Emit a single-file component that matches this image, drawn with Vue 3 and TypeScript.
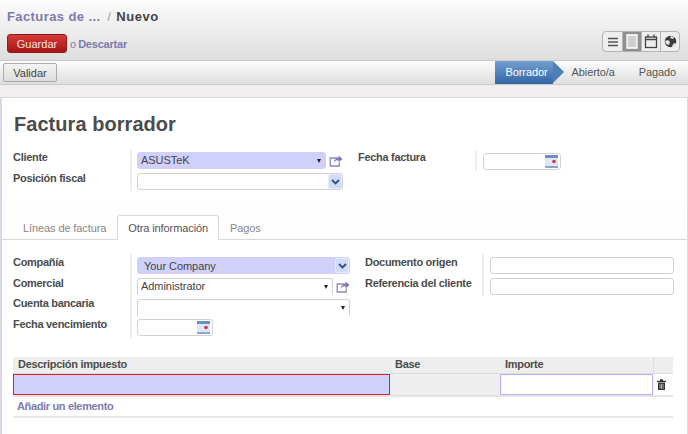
<template>
  <div class="page">
    <header class="topbar">
      <div class="crumbs">
        <a class="crumb-link">Facturas de ...</a>
        <span class="crumb-sep">/</span>
        <span class="crumb-now">Nuevo</span>
      </div>
      <div class="actions">
        <div class="save-group">
          <button class="btn-save">Guardar</button>
          <span class="or">o</span>
          <a class="discard">Descartar</a>
        </div>
        <div class="views">
          <span class="view">
            <svg width="12" height="10" viewBox="0 0 12 10"><path d="M1 1.500h10M1 5h10M1 8.500h10" stroke="#555" stroke-width="1.600" /></svg>
          </span>
          <span class="view view-on">
            <svg width="12" height="15" viewBox="0 0 12 15"><rect x="1.200" y="1" width="9.600" height="13" fill="#cfcfcf" stroke="#f4f4f4" stroke-width="1.800" /></svg>
          </span>
          <span class="view">
            <svg width="14" height="15" viewBox="0 0 14 15"><rect x="1.500" y="3" width="11" height="10.500" fill="#eee" stroke="#444" stroke-width="1.300" /><path d="M1.500 5.500h11" stroke="#444" stroke-width="1.600" /><path d="M4 0.500v3M10 0.500v3" stroke="#444" stroke-width="1.300" /></svg>
          </span>
          <span class="view">
            <svg width="13" height="13" viewBox="0 0 13 13"><circle cx="6.500" cy="6.500" r="5.800" fill="#3c3c3c" /><path d="M1 6l3-1 2 2-1 3-3-1zM7 1l3 1-1 2-3-1zM8 12l1-3 2-1 1 1-2 3z" fill="#e4e4e4" /></svg>
          </span>
        </div>
      </div>
    </header>

    <div class="statusbar">
      <button class="btn-validate">Validar</button>
      <div class="steps">
        <span class="step step-on">Borrador</span>
        <span class="step step-open">Abierto/a</span>
        <span class="step step-paid">Pagado</span>
      </div>
    </div>

    <div class="strip"></div>

    <main class="sheet">
      <h1 class="title">Factura borrador</h1>

      <section class="top-fields">
        <div class="group group-client">
          <div class="labels">
            <label>Cliente</label>
            <label>Posición fiscal</label>
          </div>
          <div class="inputs">
            <div class="with-link">
              <div class="field required grow">ASUSTeK<i class="caret"></i></div>
              <svg class="ext" width="14" height="12" viewBox="0 0 14 12"><path d="M9 3H1.200v8h9V7.500" fill="none" stroke="#8a88bd" stroke-width="1.300" /><path d="M4.500 7.500C5 4.500 7.500 3 9.500 3V0.500L13.500 4 9.500 7.500V5.200C7.500 5.200 5.800 5.800 4.500 7.500Z" fill="#7c7ab0" /></svg>
            </div>
            <div class="field">
              <span class="sel-btn"><svg width="9" height="6" viewBox="0 0 9 6"><path d="M1 1l3.500 3.500L8 1" fill="none" stroke="#3d4a78" stroke-width="1.800" /></svg></span>
            </div>
          </div>
        </div>
        <div class="group group-date">
          <div class="labels"><label>Fecha factura</label></div>
          <div class="inputs">
            <div class="field date-field">
              <svg class="cal" width="13" height="13" viewBox="0 0 13 13"><rect width="13" height="13" fill="#dfe6f5" /><rect width="13" height="3" fill="#6a8fc4" /><rect y="11" width="13" height="2" fill="#8ea6cc" /><circle cx="9" cy="6.500" r="1.800" fill="#c5394a" /></svg>
            </div>
          </div>
        </div>
      </section>

      <nav class="tabs">
        <a class="tab">Líneas de factura</a>
        <a class="tab tab-on">Otra información</a>
        <a class="tab">Pagos</a>
      </nav>

      <section class="info">
        <div class="group group-left">
          <div class="labels">
            <label>Compañía</label>
            <label>Comercial</label>
            <label>Cuenta bancaria</label>
            <label>Fecha vencimiento</label>
          </div>
          <div class="inputs">
            <div class="field required company">Your Company
              <span class="sel-btn"><svg width="9" height="6" viewBox="0 0 9 6"><path d="M1 1l3.500 3.500L8 1" fill="none" stroke="#3d4a78" stroke-width="1.800" /></svg></span>
            </div>
            <div class="with-link">
              <div class="field open-bottom grow">Administrator<i class="caret"></i></div>
              <svg class="ext" width="14" height="12" viewBox="0 0 14 12"><path d="M9 3H1.200v8h9V7.500" fill="none" stroke="#8a88bd" stroke-width="1.300" /><path d="M4.500 7.500C5 4.500 7.500 3 9.500 3V0.500L13.500 4 9.500 7.500V5.200C7.500 5.200 5.800 5.800 4.500 7.500Z" fill="#7c7ab0" /></svg>
            </div>
            <div class="field open-bottom"><i class="caret"></i></div>
            <div class="field date-due">
              <svg class="cal" width="13" height="13" viewBox="0 0 13 13"><rect width="13" height="13" fill="#dfe6f5" /><rect width="13" height="3" fill="#6a8fc4" /><rect y="11" width="13" height="2" fill="#8ea6cc" /><circle cx="9" cy="6.500" r="1.800" fill="#c5394a" /></svg>
            </div>
          </div>
        </div>
        <div class="group group-right">
          <div class="labels">
            <label>Documento origen</label>
            <label>Referencia del cliente</label>
          </div>
          <div class="inputs">
            <div class="field"></div>
            <div class="field"></div>
          </div>
        </div>
      </section>

      <table class="taxes">
        <thead>
          <tr>
            <th class="col-desc">Descripción impuesto</th>
            <th class="col-base">Base</th>
            <th class="col-amount">Importe</th>
            <th class="col-del"></th>
          </tr>
        </thead>
        <tbody>
          <tr class="edit-row">
            <td><div class="cell-invalid"></div></td>
            <td></td>
            <td><div class="cell-amount"></div></td>
            <td class="del-cell">
              <svg width="9" height="11" viewBox="0 0 9 11"><path d="M0 1.800h9V3H0zM3 0.300h3v1.500H3z" fill="#333" /><path d="M1 3.500h7V11H1z" fill="#333" /><path d="M3 4.800v5M4.500 4.800v5M6 4.800v5" stroke="#ddd" stroke-width="0.700" /></svg>
            </td>
          </tr>
          <tr class="add-row">
            <td colspan="4"><a class="add-link">Añadir un elemento</a></td>
          </tr>
        </tbody>
      </table>
    </main>
  </div>
</template>

<script setup lang="ts">
</script>

<style>
html, body {
  margin: 0;
  overflow: hidden;
}
</style>

<style scoped>
.page {
  width: 688px;
  height: 434px;
  overflow: hidden;
  font-family: "Liberation Sans", Arial, sans-serif;
  font-size: 11px;
  color: #4c4c4c;
  background: #f0eeee;
}

/* top bar */
.topbar {
  box-sizing: border-box;
  height: 61px;
  padding: 8px 8px 0 7px;
  background: linear-gradient(#fcfcfc, #dedede);
  border-bottom: 1px solid #cacaca;
}
.crumbs {
  display: flex;
  align-items: baseline;
  height: 18px;
  font-size: 13px;
  line-height: 18px;
  letter-spacing: 0.4px;
}
.crumb-link {
  color: #7c7bad;
  font-weight: bold;
}
.crumb-sep {
  margin-left: 7px;
  color: #999;
  font-size: 12px;
}
.crumb-now {
  margin-left: 5px;
  color: #444;
  font-weight: bold;
  letter-spacing: 0.6px;
}
.actions {
  display: flex;
  justify-content: space-between;
  margin-top: 7px;
}
.save-group {
  display: flex;
  align-items: center;
  height: 19px;
  margin-top: 1px;
}
.btn-save {
  box-sizing: border-box;
  width: 60px;
  height: 19px;
  padding: 0;
  border: 1px solid #8d1c1c;
  border-radius: 3px;
  background: linear-gradient(#d63a3a, #aa1414);
  color: #f6e4e4;
  font-family: inherit;
  font-size: 11px;
}
.or {
  margin-left: 3px;
  color: #7c7bad;
  font-size: 11px;
}
.discard {
  margin-left: 2px;
  color: #7c7bad;
  font-weight: bold;
  font-size: 11px;
  letter-spacing: -0.2px;
}
.views {
  display: flex;
  box-sizing: border-box;
  height: 21px;
  margin-top: -2px;
  border: 1px solid #b5b5b5;
  border-radius: 4px;
  background: #eee;
  overflow: hidden;
}
.view {
  display: flex;
  align-items: center;
  justify-content: center;
  box-sizing: border-box;
  width: 19px;
  border-left: 1px solid #b5b5b5;
}
.view:first-child {
  border-left: 0;
}
.view-on {
  background: #8f8f8f;
}

/* status bar */
.statusbar {
  display: flex;
  justify-content: space-between;
  box-sizing: border-box;
  height: 24px;
  padding-left: 3px;
  background: linear-gradient(#fcfcfc, #dedede);
  border-bottom: 1px solid #cacaca;
}
.btn-validate {
  box-sizing: border-box;
  width: 54px;
  height: 19px;
  margin-top: 2px;
  padding: 0;
  border: 1px solid #aaa;
  border-radius: 2px;
  background: linear-gradient(#f4f4f4, #dcdcdc);
  color: #444;
  font-family: inherit;
  font-size: 11px;
}
.steps {
  display: flex;
  height: 23px;
  line-height: 23px;
  letter-spacing: -0.1px;
}
.step {
  position: relative;
  color: #555;
}
.step-on {
  box-sizing: border-box;
  width: 58px;
  padding-left: 11px;
  background: linear-gradient(#729fcf, #3465a4);
  color: #fff;
}
.step-on::after {
  content: "";
  position: absolute;
  top: 0;
  right: -11px;
  border-left: 11px solid #4f7fb9;
  border-top: 11.500px solid transparent;
  border-bottom: 11.500px solid transparent;
}
.step-open {
  margin-left: 19px;
}
.step-paid {
  margin-left: 24px;
  margin-right: 12px;
}

.strip {
  height: 12px;
  background: #f0eeee;
}

/* sheet */
.sheet {
  box-sizing: border-box;
  height: 337px;
  border: 1px solid #d9d8e4;
  border-width: 1px 1px 0 2px;
  background: #fff;
}
.title {
  margin: 0;
  padding: 14px 0 0 12px;
  color: #4c4c4c;
  font-size: 20px;
  line-height: 24px;
  font-weight: bold;
  letter-spacing: 0.05px;
}

.group {
  display: flex;
}
.labels {
  display: flex;
  flex-direction: column;
  box-sizing: border-box;
  border-right: 2px solid #eeeeee;
}
.labels label {
  height: 21px;
  color: #4c4c4c;
  font-weight: bold;
  font-size: 11px;
  line-height: 15px;
  letter-spacing: -0.3px;
}
.inputs {
  display: flex;
  flex-direction: column;
  gap: 4px;
}

.top-fields {
  display: flex;
  padding: 14px 0 0 11px;
}
.group-client .labels {
  width: 119px;
  height: 41px;
}
.group-client .inputs {
  width: 206px;
  margin-left: 5px;
  padding-top: 2px;
}
.with-link {
  display: flex;
  align-items: center;
  gap: 3px;
}
.grow {
  flex: 1;
}

.field {
  position: relative;
  box-sizing: border-box;
  height: 17px;
  padding-left: 3px;
  border: 1px solid #d2d2d2;
  border-radius: 3px;
  background: #fff;
  color: #444;
  font-size: 11px;
  line-height: 15px;
  letter-spacing: -0.05px;
}
.required {
  border-color: #d0d0fa;
  background: #d0d0fa;
}
.open-bottom {
  border-bottom-color: transparent;
  border-radius: 3px 3px 0 0;
}
.caret {
  position: absolute;
  top: 6px;
  right: 4px;
  border-top: 4px solid #222;
  border-left: 2.500px solid transparent;
  border-right: 2.500px solid transparent;
}
.sel-btn {
  position: absolute;
  top: 0;
  right: 0;
  display: flex;
  align-items: center;
  justify-content: center;
  box-sizing: border-box;
  width: 14px;
  height: 15px;
  background: #cfdcf7;
  border: 1px solid #e4ebfa;
  border-radius: 2px;
}
.ext {
  flex: none;
}
.cal {
  position: absolute;
  top: 1px;
  right: 2px;
}

.group-date {
  margin-left: 15px;
}
.group-date .labels {
  width: 119px;
  height: 21px;
}
.date-field {
  width: 78px;
  margin-left: 6px;
  margin-top: 3px;
}

/* tabs */
.tabs {
  display: flex;
  box-sizing: border-box;
  height: 34px;
  margin-top: 15px;
  padding: 9px 0 0 10px;
  background: #fdfdfd;
  border-bottom: 1px solid #d8d8d8;
  color: #888;
}
.tab {
  box-sizing: border-box;
  height: 25px;
  padding: 0 10px;
  border: 1px solid transparent;
  border-bottom: 0;
  line-height: 24px;
  letter-spacing: -0.1px;
}
.tab-on {
  background: #fff;
  border-color: #d8d8d8;
  border-radius: 3px 3px 0 0;
  color: #555;
}

/* other info */
.info {
  display: flex;
  padding: 14px 0 0 11px;
}
.group-left .labels {
  width: 119px;
  height: 84px;
}
.group-left .inputs {
  width: 213px;
  margin-left: 5px;
  padding-top: 3px;
}
.company {
  padding-left: 6px;
  padding-top: 1px;
}
.date-due {
  width: 76px;
  margin-top: -1px;
}
.group-right {
  margin-left: 15px;
}
.group-right .labels {
  width: 119px;
  height: 42px;
}
.group-right .inputs {
  width: 184px;
  margin-left: 6px;
  padding-top: 3px;
}
.group-left .labels label,
.group-right .labels label {
  box-sizing: border-box;
  height: 21px;
  padding-top: 1px;
}
.group-left .labels label:nth-child(2) {
  height: 20px;
}

/* taxes table */
.taxes {
  width: 660px;
  margin: 19px 0 0 11px;
  border-collapse: collapse;
  table-layout: fixed;
}
.taxes th {
  box-sizing: border-box;
  height: 16px;
  padding: 0 0 0 5px;
  background: #eee;
  border-bottom: 1px solid #ddd;
  color: #4c4c4c;
  font-size: 11px;
  line-height: 15px;
  text-align: left;
  letter-spacing: -0.3px;
}
.col-desc { width: 377px; }
.col-base { width: 110px; }
.col-amount { width: 153px; }
.col-del { width: 20px; border-left: 1px solid #ddd; }
.edit-row td {
  box-sizing: border-box;
  height: 22px;
  padding: 0;
  background: #eee;
  border-bottom: 2px solid #e4e4e4;
  vertical-align: top;
}
.edit-row .del-cell {
  padding: 5px 0 0 4px;
  background: #fff;
}
.cell-invalid {
  box-sizing: border-box;
  height: 21px;
  background: #d0d0fa;
  border: 1px solid #e0202a;
}
.cell-amount {
  box-sizing: border-box;
  height: 21px;
  background: #fff;
  border: 1px solid #b0b0ff;
}
.add-row td {
  box-sizing: border-box;
  height: 21px;
  padding: 0 0 0 4px;
  border-bottom: 2px solid #e8e8e8;
  vertical-align: top;
  line-height: 18px;
}
.add-link {
  color: #7c7bad;
  font-weight: bold;
  font-size: 11px;
  letter-spacing: -0.35px;
}
</style>
